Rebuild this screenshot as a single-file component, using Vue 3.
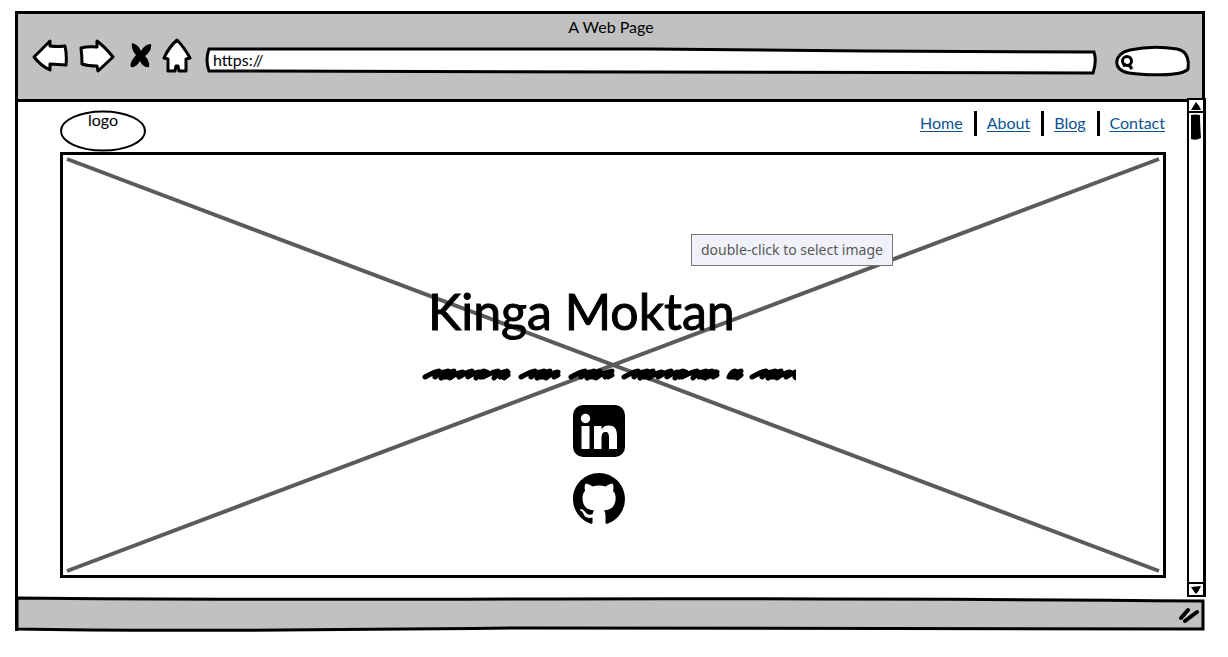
<script setup>
const links = ['Home', 'About', 'Blog', 'Contact']

const words = [
  [3, 86], [99, 136], [149, 190], [202, 295], [307, 319], [330, 378]
]
const rhythm = [14, 9, 6, 6, 6, 12, 12, 11, 7, 6]

function scribble([from, to]) {
  let d = `M${from} 10`
  let x = from
  let i = to - from < 20 ? 2 : 0
  while (x < to - 3) {
    const top = Math.min(x + rhythm[i % rhythm.length], to)
    d += `Q${top - 3} 4 ${top} ${4 + (i % 2)}L${top - 4} ${10 + (i % 3 === 1 ? 1 : 0)}`
    x = top - 3
    i++
  }
  return d + `L${to} 8`
}
</script>

<template>
  <div class="window">
    <header class="toolbar">
      <div class="title">A Web Page</div>
      <div class="controls">
        <button class="tool" aria-label="Back">
          <svg width="36" height="34" viewBox="0 0 36 34"><path d="M2 18 18 2 18 7Q26 8 33 7Q35 16 34 26L18 25 18 31Q9 27 2 18Z" /></svg>
        </button>
        <button class="tool forward" aria-label="Forward">
          <svg width="38" height="34" viewBox="0 0 38 34"><path d="M3 9Q10 7 19 8L19 2Q27 8 35 18L20 32 19 27Q10 27 4 25Q4 17 3 9Z" /></svg>
        </button>
        <button class="tool stop" aria-label="Stop">
          <svg width="22" height="26" viewBox="0 0 22 26"><path class="solid" d="M2 0Q8 1 11 8Q15 1 21 1Q22 8 15 13Q20 18 19 24Q13 25 10 18Q6 25 1 24Q-1 20 6 12Q1 7 2 0Z" /></svg>
        </button>
        <button class="tool home" aria-label="Home page">
          <svg width="30" height="36" viewBox="0 0 30 36"><path d="M15 2Q22 9 28 20L24 21 24 33 17 33 16 28 14 28 13 33 6 33 6 21 2 20Q7 9 15 2Z" /></svg>
        </button>
        <div class="address">
          <svg class="shape" viewBox="0 0 891 28" preserveAspectRatio="none" aria-hidden="true"><path d="M4 2 445 2 660 4 888 5Q891 14 887 26L4 24Q0 13 4 2Z" /></svg>
          <input type="text" aria-label="Address" value="https://" />
        </div>
        <div class="search">
          <svg class="shape" viewBox="0 0 75 32" preserveAspectRatio="none" aria-hidden="true"><path d="M15 5Q38 0 62 4C74 6 74 19 73 24C67 32 27 30 14 28C-2 26-3 9 15 5Z" /></svg>
          <svg class="glass" width="14" height="16" viewBox="0 0 14 16" aria-hidden="true"><circle cx="7" cy="6" r="4.5" /><path d="M3 11 6 9M9 10 12 14" /></svg>
          <input type="search" aria-label="Search" />
        </div>
      </div>
    </header>

    <div class="viewport">
      <main class="page">
        <div class="top">
          <div class="logo"><svg class="shape" viewBox="0 0 86 42" preserveAspectRatio="none" aria-hidden="true"><ellipse cx="43" cy="21" rx="42" ry="19.5" /></svg><span>logo</span></div>
          <nav>
            <a v-for="link in links" :key="link" href="#">{{ link }}</a>
          </nav>
        </div>
        <section class="hero">
          <svg class="cross" aria-hidden="true"><line x1="0" y1="0" x2="100%" y2="100%" /><line x1="0" y1="100%" x2="100%" y2="0" /></svg>
          <div class="intro">
            <h1>Kinga Moktan</h1>
            <svg class="scribble" width="374" height="14" viewBox="0 0 374 14" aria-hidden="true"><path v-for="word in words" :key="word[0]" :d="scribble(word)" /></svg>
            <a class="social" href="#" aria-label="LinkedIn">
              <svg width="52" height="52" viewBox="0 0 52 52"><rect width="52" height="52" rx="10" /><g fill="#fff"><circle cx="12.5" cy="13.5" r="4.7" /><path d="M8.5 21h8v23h-8zM21 21h7.5v3.2c1.4-2.3 3.8-3.8 7.2-3.8 6.2 0 8.3 4 8.3 10.2V44h-8V32.500c0-3.500-.8-5.500-3.500-5.500-2.800 0-4 2-4 5.500V44H21z" /></g></svg>
            </a>
            <a class="social" href="#" aria-label="GitHub">
              <svg width="52" height="52" viewBox="0 0 16 16"><path d="M8 0C3.580 0 0 3.580 0 8c0 3.540 2.290 6.530 5.470 7.590.4.070.55-.17.55-.38 0-.19-.01-.82-.01-1.490-2.010.37-2.530-.49-2.690-.94-.09-.23-.48-.94-.82-1.130-.28-.15-.68-.52-.01-.53.63-.01 1.080.58 1.230.82.72 1.210 1.870.87 2.330.66.07-.52.28-.87.51-1.070-1.780-.2-3.640-.89-3.640-3.950 0-.87.31-1.590.82-2.150-.08-.2-.36-1.020.08-2.120 0 0 .67-.21 2.200.82a7.600 7.600 0 0 1 4 0c1.530-1.040 2.200-.82 2.200-.82.44 1.100.16 1.920.08 2.120.51.56.82 1.270.82 2.150 0 3.070-1.870 3.750-3.650 3.950.29.25.54.73.54 1.480 0 1.070-.01 1.930-.01 2.200 0 .21.15.46.55.38A8.010 8.010 0 0 0 16 8c0-4.420-3.580-8-8-8z" /></svg>
            </a>
          </div>
          <div class="tooltip" role="tooltip">double-click to select image</div>
        </section>
      </main>
      <div class="scrollbar">
        <button aria-label="Scroll up"><svg width="10" height="8" viewBox="0 0 10 8"><path d="M5 0Q8 3 10 8L0 8Z" /></svg></button>
        <div class="track"><svg class="thumb" width="11" height="26" viewBox="0 0 11 26"><path d="M1 1Q5 0 10 1Q10 10 11 24Q6 27 1 25Q1 10 1 1Z" /></svg></div>
        <button aria-label="Scroll down"><svg width="10" height="8" viewBox="0 0 10 8"><path d="M0 1L10 0Q8 5 5 8Q3 6 0 1Z" /></svg></button>
      </div>
    </div>

    <footer class="status">
      <svg class="shape" viewBox="0 0 1190 34" preserveAspectRatio="none" aria-hidden="true"><path d="M2 1Q200 3 500 2Q800 1 1188 4L1188 32Q800 30 500 31Q150 35 2 32Z" /></svg>
      <svg class="grip" width="20" height="17" viewBox="0 0 20 17" aria-hidden="true"><path d="M2 11 9 3M6 14 18 5" /></svg>
    </footer>
  </div>
</template>

<style>
body {
  background: #fff;
}
</style>

<style scoped>
* {
  box-sizing: border-box;
}

.window {
  display: flex;
  flex-direction: column;
  min-height: calc(100vh - 37px);
  margin: 11px 23px 26px 15px;
  border-left: 3px solid #000;
  font-family: Lato, "Open Sans", sans-serif;
  font-size: 16px;
  line-height: 20px;
  color: #000;
}

.toolbar {
  height: 91px;
  padding: 3px 12px 0 14px;
  background: #c1c1c1;
  border: 3px solid #000;
  border-left: 0;
}

.title {
  text-align: center;
}

.controls {
  display: flex;
  align-items: flex-start;
  height: 44px;
}

button {
  display: flex;
  align-items: center;
  justify-content: center;
  padding: 0;
  border: 0;
  background: none;
}

.tool {
  height: 38px;
}

.tool path {
  fill: #fff;
  stroke: #000;
  stroke-width: 3;
  stroke-linejoin: round;
}

.tool .solid {
  fill: #000;
  stroke: none;
}

.forward {
  margin-left: 10px;
}

.stop {
  margin-left: 14px;
}

.home {
  margin-left: 10px;
}

.address,
.search,
.logo,
.status {
  position: relative;
}

.shape {
  position: absolute;
  inset: 0;
  width: 100%;
  height: 100%;
  overflow: visible;
}

.shape path,
.shape ellipse {
  fill: #fff;
  stroke: #000;
  stroke-width: 3;
  vector-effect: non-scaling-stroke;
}

input {
  position: relative;
  width: 100%;
  border: 0;
  outline: 0;
  background: none;
  font: inherit;
  color: inherit;
}

.address {
  flex: 1;
  height: 28px;
  margin: 10px 0 0 13px;
}

.address input {
  height: 24px;
  padding: 0 8px;
}

.search {
  width: 75px;
  height: 32px;
  margin: 8px 0 0 18px;
}

.search input {
  height: 32px;
  padding: 0 12px 0 20px;
}

.glass {
  position: absolute;
  left: 5px;
  top: 10px;
  fill: none;
  stroke: #000;
  stroke-width: 3;
}

.viewport {
  flex: 1;
  display: flex;
}

.page {
  flex: 1;
  display: flex;
  flex-direction: column;
  padding: 8px 21px 19px 42px;
}

.top {
  display: flex;
  justify-content: space-between;
  height: 42px;
}

.logo {
  width: 86px;
  height: 42px;
  text-align: center;
}

.logo ellipse {
  stroke-width: 2;
}

.logo span {
  position: relative;
}

nav {
  display: flex;
  height: 25px;
  margin: 1px 1px 0 0;
}

nav a {
  color: #0b5394;
  line-height: 24px;
  text-underline-offset: 2px;
}

nav a + a {
  margin-left: 11px;
  padding-left: 10px;
  border-left: 3px solid #000;
}

.hero {
  position: relative;
  flex: 1;
  border: 3px solid #000;
  padding: 124px 8px 20px 0;
}

.cross {
  position: absolute;
  left: 4px;
  top: 4px;
  width: calc(100% - 8px);
  height: calc(100% - 8px);
  overflow: visible;
}

.cross line {
  stroke: #5b5b5b;
  stroke-width: 4;
}

.intro {
  position: relative;
  width: 374px;
  margin: 0 auto;
}

h1 {
  margin: 0;
  padding-left: 6px;
  font-size: 50px;
  font-weight: 400;
  line-height: 64px;
  white-space: nowrap;
  -webkit-text-stroke: 1px #000;
}

.scribble {
  display: block;
  margin: 24px 0;
}

.scribble path {
  fill: none;
  stroke: #000;
  stroke-width: 5;
  stroke-linecap: round;
  stroke-linejoin: round;
}

.social {
  display: block;
  width: 52px;
  height: 52px;
  margin: 0 0 16px 151px;
}

.social svg {
  display: block;
}

.tooltip {
  position: absolute;
  left: calc(50% + 78px);
  top: 79px;
  padding: 0 9px;
  border: 1px solid #767676;
  background: #f1f2f9;
  color: #575757;
  font-family: "Noto Sans", "Open Sans", sans-serif;
  font-size: 14px;
  line-height: 30px;
  white-space: nowrap;
}

.scrollbar {
  display: flex;
  flex-direction: column;
  width: 19px;
  margin: -4px -1px 0 0;
  border: 2px solid #000;
  border-right-width: 3px;
  background: #fff;
  z-index: 1;
}

.scrollbar button {
  height: 11px;
}

.track {
  flex: 1;
  padding: 1px 0 0 1px;
  border: solid #000;
  border-width: 2px 0;
}

.thumb {
  display: block;
}

.status {
  height: 34px;
  margin-left: -3px;
}

.status .shape path {
  fill: #c1c1c1;
}

.grip {
  position: absolute;
  right: 6px;
  top: 10px;
  fill: none;
  stroke: #000;
  stroke-width: 4;
  stroke-linecap: round;
}
</style>
